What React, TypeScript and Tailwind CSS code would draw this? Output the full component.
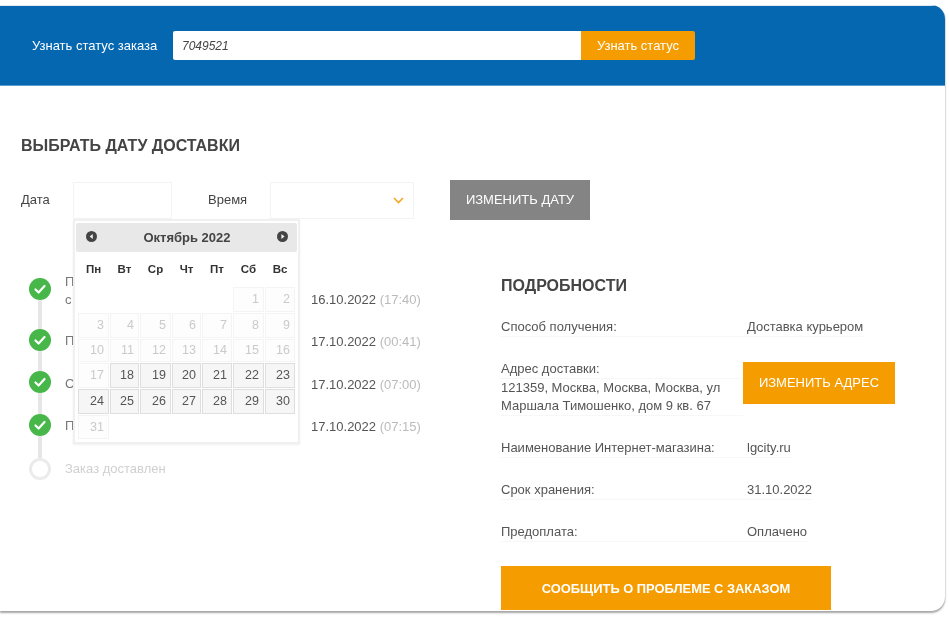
const weekDays = ['Пн', 'Вт', 'Ср', 'Чт', 'Пт', 'Сб', 'Вс']

const steps = [
  { title: 'П', sub: 'с', date: '16.10.2022', time: '(17:40)', rowClass: 'h-[51px]', dateClass: 'pt-[13px]', textClass: '-mt-[5px]' },
  { title: 'П', date: '17.10.2022', time: '(00:41)', rowClass: 'h-[42px]', dateClass: 'pt-[4px]', textClass: 'pt-[3px]' },
  { title: 'С', date: '17.10.2022', time: '(07:00)', rowClass: 'h-[43px]', dateClass: 'pt-[5px]', textClass: 'pt-[4px]' },
  { title: 'П', date: '17.10.2022', time: '(07:15)', rowClass: 'h-[44px]', dateClass: 'pt-[4px]', textClass: 'pt-[3px]' },
]

const details = [
  { label: 'Способ получения:', value: 'Доставка курьером' },
  { label: 'Наименование Интернет-магазина:', value: 'lgcity.ru' },
  { label: 'Срок хранения:', value: '31.10.2022' },
  { label: 'Предоплата:', value: 'Оплачено' },
]

function CheckMark() {
  return (
    <svg width="12" height="12" viewBox="0 0 12 12" fill="none">
      <path d="M1.5 6.5 L4.6 9.5 L10.5 3" stroke="white" strokeWidth="2.2" strokeLinecap="round" strokeLinejoin="round" />
    </svg>
  )
}

function NavArrow({ dir }: { dir: 'left' | 'right' }) {
  return (
    <svg width="11" height="11" viewBox="0 0 11 11">
      <circle cx="5.5" cy="5.5" r="5.5" fill="#444" />
      <path d={dir === 'left' ? 'M6.8 3 L3.6 5.5 L6.8 8 Z' : 'M4.4 3 L7.6 5.5 L4.4 8 Z'} fill="#eee" />
    </svg>
  )
}

function DayCell({ day, width }: { day: number; width: string }) {
  const active = day >= 18 && day <= 30
  return (
    <div
      className={`${width} flex h-full items-center justify-end border pr-[4px] text-[12.5px] ${
        active ? 'border-[#dedede] bg-[#f6f6f6] text-[#555]' : 'border-[#f4f4f4] bg-[#fdfdfd] text-[#cacaca]'
      }`}
    >
      {day}
    </div>
  )
}

const colWidths = ['w-[31px]', 'w-[29px]', 'w-[31px]', 'w-[29px]', 'w-[30px]', 'w-[31px]', 'w-[30px]']

function Calendar() {
  const rows: { days: (number | null)[]; height: string }[] = [
    { days: [null, null, null, null, null, 1, 2], height: 'h-[25px]' },
    { days: [3, 4, 5, 6, 7, 8, 9], height: 'h-[25px]' },
    { days: [10, 11, 12, 13, 14, 15, 16], height: 'h-[23px]' },
    { days: [17, 18, 19, 20, 21, 22, 23], height: 'h-[25px]' },
    { days: [24, 25, 26, 27, 28, 29, 30], height: 'h-[25px]' },
    { days: [31, null, null, null, null, null, null], height: 'h-[24px]' },
  ]
  return (
    <div className="absolute top-[39px] left-[52px] z-10 h-[225px] w-[227px] border-2 border-[#f0f0f0] bg-white px-[1px] pt-[2px] shadow-[0_1px_2px_rgba(0,0,0,0.06)]">
      <div className="flex h-[29px] items-center justify-between rounded-[2px] bg-[#e8e8e8] pr-[9px] pb-[2px] pl-[10px]">
        <NavArrow dir="left" />
        <span className="pt-[2px] text-[13px] font-bold text-[#444]">Октябрь 2022</span>
        <NavArrow dir="right" />
      </div>
      <div className="mt-[9px] flex h-[18px] items-center gap-[1px] pl-[2px]">
        {weekDays.map((d, i) => (
          <div key={d} className={`${colWidths[i]} text-center text-[11.5px] font-bold text-[#333]`}>
            {d}
          </div>
        ))}
      </div>
      <div className="mt-[8px] flex flex-col gap-[1px] pl-[2px]">
        {rows.map((row) => (
          <div key={row.days.join('-')} className={`flex gap-[1px] ${row.height}`}>
            {row.days.map((day, i) =>
              day ? <DayCell key={i} day={day} width={colWidths[i]} /> : <div key={i} className={colWidths[i]} />,
            )}
          </div>
        ))}
      </div>
    </div>
  )
}

export default function App() {
  return (
    <div className="h-[622px] w-[949px] overflow-hidden bg-white pt-[5px] font-['Liberation_Sans',Arial,sans-serif] blur-[0.7px]">
      <div className="h-[606px] w-[945px] overflow-hidden rounded-tr-[14px] rounded-br-[14px] bg-white shadow-[0_2px_2px_rgba(0,0,0,0.35),1px_0_1px_rgba(0,0,0,0.06)]">
        {/* status bar */}
        <div className="flex h-[81px] items-center border-t border-b border-t-[#dfeaf5] border-b-[#5c9bd0] bg-[#0667b1] pl-[32px]">
          <span className="w-[141px] text-[13px] text-white">Узнать статус заказа</span>
          <div className="flex h-[29px] w-[408px] items-center rounded-l-[2px] bg-white pl-[9px] text-[12px] text-[#444] italic">
            7049521
          </div>
          <button className="h-[29px] w-[114px] rounded-r-[2px] bg-[#f59c00] text-[13px] text-white">Узнать статус</button>
        </div>

        {/* date form */}
        <div className="pt-[50px] pl-[21px]">
          <h2 className="text-[16px] leading-[20px] font-bold text-[#444]">ВЫБРАТЬ ДАТУ ДОСТАВКИ</h2>
          <div className="relative mt-[24px] flex h-[40px] items-center">
            <span className="w-[52px] text-[13px] text-[#444]">Дата</span>
            <div className="mt-[1px] h-[37px] w-[99px] border border-[#f3f3f3]" />
            <span className="ml-[36px] w-[62px] text-[13px] text-[#444]">Время</span>
            <div className="mt-[1px] flex h-[37px] w-[144px] items-center justify-end border border-[#f3f3f3] pr-[9px]">
              <svg width="11" height="7" viewBox="0 0 11 7" fill="none">
                <path d="M1 1 L5.5 5.5 L10 1" stroke="#f5a623" strokeWidth="1.6" />
              </svg>
            </div>
            <button className="ml-[36px] h-[40px] w-[140px] bg-[#848484] text-[13px] text-white">ИЗМЕНИТЬ ДАТУ</button>
            <Calendar />
          </div>
        </div>

        <div className="flex">
          {/* tracking steps */}
          <div className="mt-[58px] w-[501px] pl-[29px]">
            {steps.map((s) => (
              <div key={s.date + s.time} className={`flex ${s.rowClass}`}>
                <div className="flex w-[22px] flex-col items-center">
                  <div className="flex size-[22px] shrink-0 items-center justify-center rounded-full bg-[#46b748]">
                    <CheckMark />
                  </div>
                  <div className="w-[4px] flex-1 bg-[#e6e6e6]" />
                </div>
                <div className={`ml-[14px] w-[246px] text-[13px] leading-[18px] text-[#777] ${s.textClass}`}>
                  <div>{s.title}</div>
                  {s.sub && <div>{s.sub}</div>}
                </div>
                <div className={`text-[13px] leading-[18px] text-[#555] ${s.dateClass}`}>
                  {s.date} <span className="text-[#bbb]">{s.time}</span>
                </div>
              </div>
            ))}
            <div className="flex h-[22px] items-center">
              <div className="size-[22px] rounded-full border-[3px] border-[#ebebeb]" />
              <span className="ml-[14px] text-[13px] text-[#d0d0d0]">Заказ доставлен</span>
            </div>
          </div>

          {/* order details */}
          <div className="mt-[56px]">
            <h2 className="text-[16px] leading-[20px] font-bold text-[#444]">ПОДРОБНОСТИ</h2>
            <div className="mt-[22px] flex flex-col gap-[23px] text-[13px] leading-[18px] text-[#555]">
              <DetailRow {...details[0]} />
              <div className="flex">
                <div className="w-[242px]">
                  <div className="w-fit min-w-[240px] border-b border-[#f7f7f7]">Адрес доставки:</div>
                  <div className="border-b border-[#f7f7f7]">
                    121359, Москва, Москва, Москва, ул
                    <br />
                    Маршала Тимошенко, дом 9 кв. 67
                  </div>
                </div>
                <button className="mt-[2px] h-[42px] w-[152px] bg-[#f59c00] text-[13px] text-white">ИЗМЕНИТЬ АДРЕС</button>
              </div>
              <DetailRow {...details[1]} />
              <DetailRow {...details[2]} />
              <DetailRow {...details[3]} />
            </div>
            <button className="mt-[24px] h-[44px] w-[330px] bg-[#f59c00] pt-[2px] text-[12.9px] font-bold text-white">
              СООБЩИТЬ О ПРОБЛЕМЕ С ЗАКАЗОМ
            </button>
          </div>
        </div>
      </div>
    </div>
  )
}

function DetailRow({ label, value }: { label: string; value: string }) {
  return (
    <div className="flex items-start">
      <div className="w-[246px] border-b border-[#f7f7f7]">{label}</div>
      <div className="border-b border-[#f7f7f7]">{value}</div>
    </div>
  )
}
